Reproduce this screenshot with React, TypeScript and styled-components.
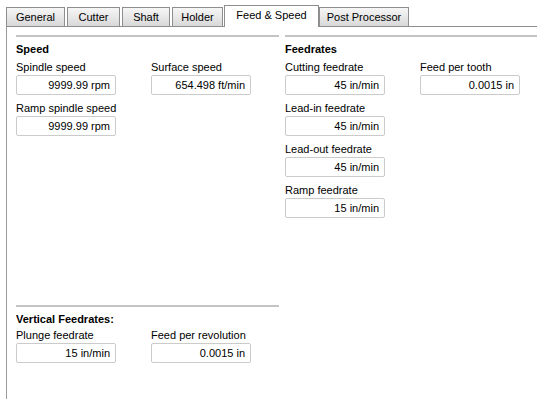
import React from 'react';
import styled, { createGlobalStyle } from 'styled-components';

const GlobalStyle = createGlobalStyle`
  body {
    margin: 0;
    background: #fff;
    font-family: "Liberation Sans", Arial, sans-serif;
    font-size: 11px;
    color: #000;
  }
`;

const Window = styled.div`
  width: 537px;
  height: 399px;
  overflow: hidden;
  background: #fff;
`;

const TabStrip = styled.div`
  display: flex;
  align-items: flex-end;
  height: 26px;
  padding-left: 6px;
  position: relative;
  z-index: 1;
`;

const Tab = styled.div<{ $active?: boolean; $width: number }>`
  box-sizing: border-box;
  width: ${p => p.$width}px;
  height: ${p => (p.$active ? 22 : 19)}px;
  margin: ${p => (p.$active ? '0 0 -1px -1px' : '0 2px 0 0')};
  display: flex;
  align-items: center;
  justify-content: center;
  padding-bottom: ${p => (p.$active ? 3 : 0)}px;
  border: 1px solid #8e8e8e;
  border-bottom: none;
  background: ${p => (p.$active ? '#fff' : 'linear-gradient(to bottom, #f6f6f6, #e6e6e6 55%, #d8d8d8)')};
  white-space: nowrap;
`;

const Panel = styled.div`
  box-sizing: border-box;
  height: 373px;
  margin-left: 6px;
  border-top: 1px solid #8e8e8e;
  border-left: 1px solid #9a9a9a;
  padding: 8px 0 36px 9px;
  display: grid;
  grid-template-columns: 263px 1fr;
  column-gap: 6px;
`;

const Column = styled.div`
  display: flex;
  flex-direction: column;
  min-height: 0;
`;

const Group = styled.section<{ $bottom?: boolean }>`
  margin-top: ${p => (p.$bottom ? 'auto' : '0')};
`;

const GroupRule = styled.div`
  height: 2px;
  background: #c4c4c4;
`;

const GroupTitle = styled.div`
  margin-top: 4px;
  line-height: 16px;
  font-weight: bold;
`;

const Rows = styled.div<{ $top: number }>`
  display: flex;
  flex-direction: column;
  row-gap: 5px;
  margin-top: ${p => p.$top}px;
`;

const Row = styled.div`
  display: flex;
`;

const Field = styled.div`
  flex: 0 0 135px;
  display: flex;
  flex-direction: column;
`;

const Label = styled.label`
  line-height: 16px;
  white-space: nowrap;
`;

const ValueBox = styled.input`
  box-sizing: border-box;
  width: 100px;
  height: 20px;
  margin: 0;
  padding: 0 5px 0 4px;
  border: 1px solid #cbcbcb;
  border-radius: 2px;
  background: #fff;
  font: inherit;
  color: #000;
  text-align: right;
  outline: none;
`;

type FieldData = { label: string; value: string };

const tabs = [
  { name: 'General', width: 59 },
  { name: 'Cutter', width: 53 },
  { name: 'Shaft', width: 48 },
  { name: 'Holder', width: 51 },
  { name: 'Feed & Speed', width: 95, active: true },
  { name: 'Post Processor', width: 90 },
];

const speedRows: FieldData[][] = [
  [
    { label: 'Spindle speed', value: '9999.99 rpm' },
    { label: 'Surface speed', value: '654.498 ft/min' },
  ],
  [{ label: 'Ramp spindle speed', value: '9999.99 rpm' }],
];

const verticalRows: FieldData[][] = [
  [
    { label: 'Plunge feedrate', value: '15 in/min' },
    { label: 'Feed per revolution', value: '0.0015 in' },
  ],
];

const feedRows: FieldData[][] = [
  [
    { label: 'Cutting feedrate', value: '45 in/min' },
    { label: 'Feed per tooth', value: '0.0015 in' },
  ],
  [{ label: 'Lead-in feedrate', value: '45 in/min' }],
  [{ label: 'Lead-out feedrate', value: '45 in/min' }],
  [{ label: 'Ramp feedrate', value: '15 in/min' }],
];

function FieldGroup({ title, rows, top, bottom }: { title: string; rows: FieldData[][]; top: number; bottom?: boolean }) {
  return (
    <Group $bottom={bottom}>
      <GroupRule />
      <GroupTitle>{title}</GroupTitle>
      <Rows $top={top}>
        {rows.map((row, i) => (
          <Row key={i}>
            {row.map(f => (
              <Field key={f.label}>
                <Label>{f.label}</Label>
                <ValueBox readOnly value={f.value} />
              </Field>
            ))}
          </Row>
        ))}
      </Rows>
    </Group>
  );
}

export default function App() {
  return (
    <>
      <GlobalStyle />
      <Window>
        <TabStrip>
          {tabs.map(t => (
            <Tab key={t.name} $width={t.width} $active={t.active}>
              {t.name}
            </Tab>
          ))}
        </TabStrip>
        <Panel>
          <Column>
            <FieldGroup title="Speed" rows={speedRows} top={2} />
            <FieldGroup title="Vertical Feedrates:" rows={verticalRows} top={0} bottom />
          </Column>
          <Column>
            <FieldGroup title="Feedrates" rows={feedRows} top={2} />
          </Column>
        </Panel>
      </Window>
    </>
  );
}
